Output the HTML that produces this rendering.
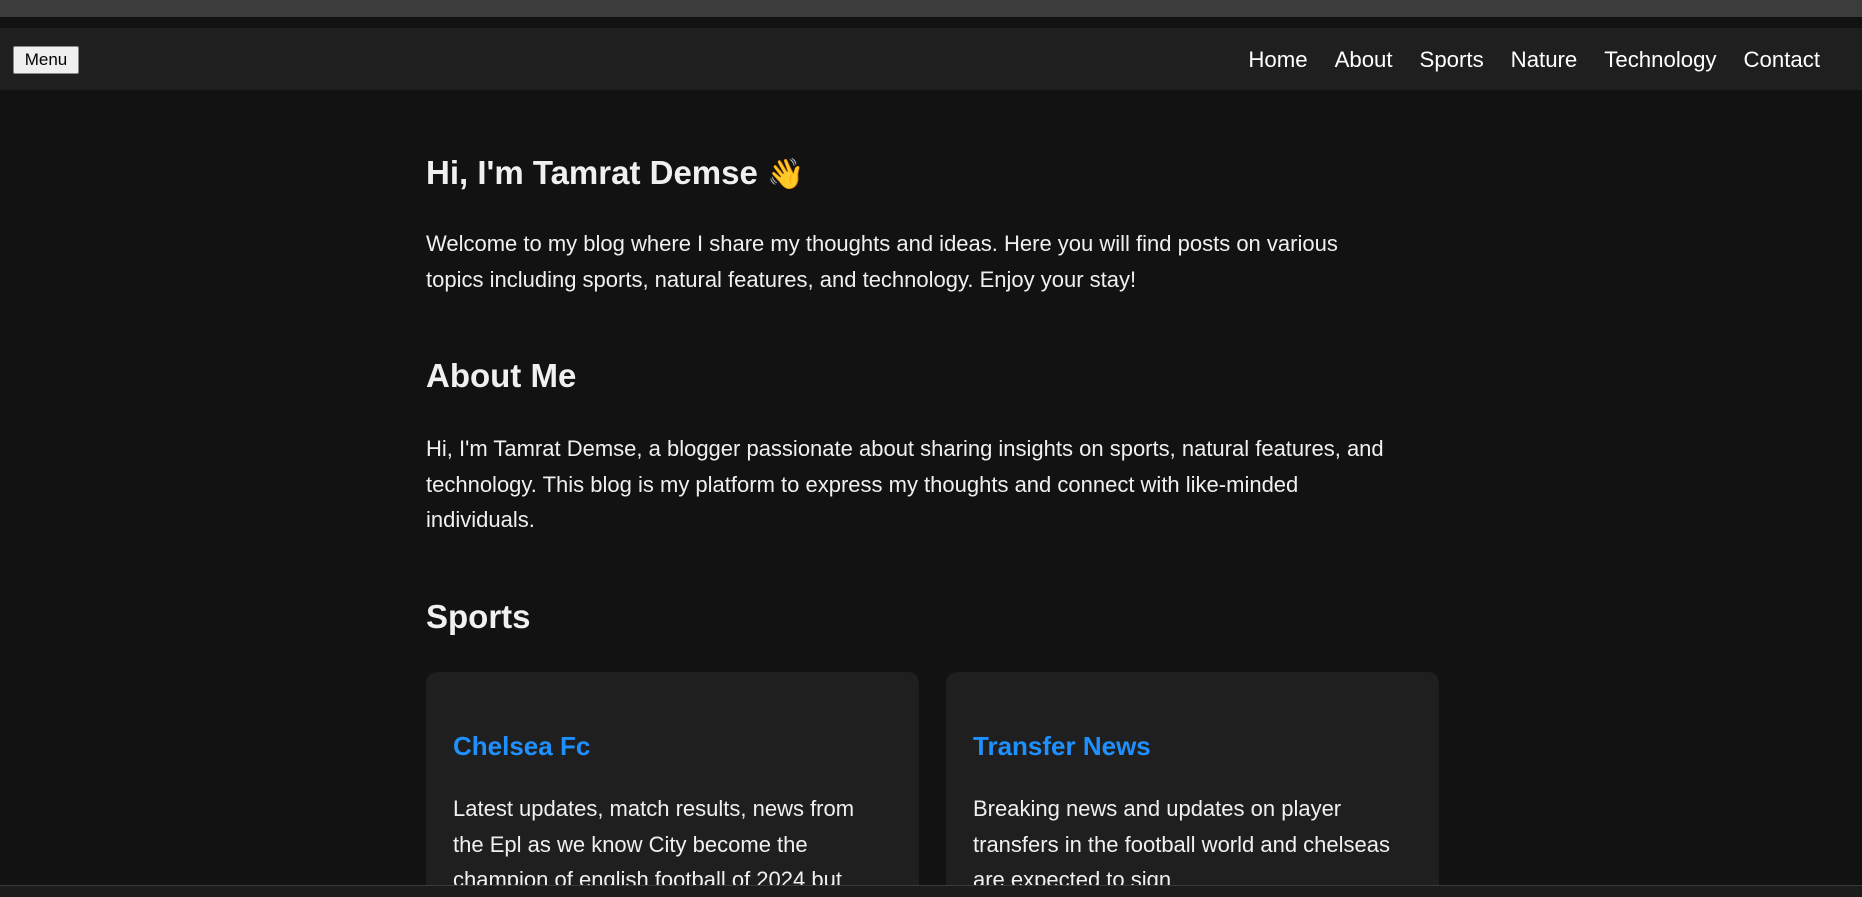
<!DOCTYPE html>
<html><head><meta charset="utf-8"><style>
*{margin:0;padding:0;box-sizing:border-box}
html,body{width:1862px;height:897px;overflow:hidden}
body{background:#121212;font-family:"Liberation Sans",Arial,sans-serif;color:#f0f0f0;position:relative}
.top{position:absolute;left:0;top:0;width:1862px;height:17px;background:#3c3c3c}
.nav{position:absolute;left:0;top:28px;width:1862px;height:62px;background:#1f1f1f}
.menu{position:absolute;left:13px;top:46px;width:66px;height:28px;background:#efefef;border:1px solid #888;color:#000;font-size:17px;text-align:center;line-height:26px;border-radius:2px}
.links{position:absolute;right:42px;top:47px;font-size:22.2px;color:#fff;white-space:nowrap}
.links span{margin-left:27px}
.abs{position:absolute;left:426px}
h1{font-size:33px;font-weight:bold;color:#f0f0f0}
h2{font-size:33px;font-weight:bold;color:#f0f0f0}
p{font-size:22px;line-height:35.5px;color:#f0f0f0;white-space:nowrap}
.card{position:absolute;top:672px;width:493px;height:225px;background:#1f1f1f;border-radius:11px 11px 0 0}
.card h3{position:absolute;left:27px;top:59px;font-size:26px;color:#1e90ff;font-weight:bold}
.card p{position:absolute;left:27px}
.bar{position:absolute;left:0;top:885px;width:1862px;height:12px;background:#1c1c1c;border-top:1px solid #3a3a3a;z-index:5}
</style></head><body>
<div class="top"></div>
<div class="nav"></div>
<div class="menu">Menu</div>
<div class="links"><span>Home</span><span>About</span><span>Sports</span><span>Nature</span><span>Technology</span><span>Contact</span></div>
<h1 class="abs" style="top:154px">Hi, I'm Tamrat Demse <span style="font-size:30px">👋</span></h1>
<p class="abs" style="top:226px">Welcome to my blog where I share my thoughts and ideas. Here you will find posts on various<br>topics including sports, natural features, and technology. Enjoy your stay!</p>
<h2 class="abs" style="top:357px">About Me</h2>
<p class="abs" style="top:431px">Hi, I'm Tamrat Demse, a blogger passionate about sharing insights on sports, natural features, and<br>technology. This blog is my platform to express my thoughts and connect with like-minded<br>individuals.</p>
<h2 class="abs" style="top:598px">Sports</h2>
<div class="card" style="left:426px"><h3>Chelsea Fc</h3><p style="top:119px">Latest updates, match results, news from<br>the Epl as we know City become the<br>champion of english football of 2024 but</p></div>
<div class="card" style="left:946px"><h3>Transfer News</h3><p style="top:119px">Breaking news and updates on player<br>transfers in the football world and chelseas<br>are expected to sign</p></div>
<div class="bar"></div>
</body></html>
